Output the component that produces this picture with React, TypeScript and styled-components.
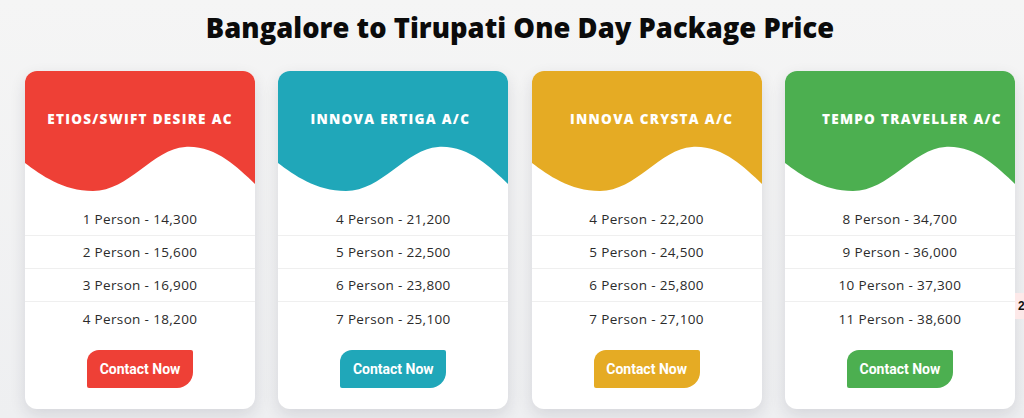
import React from "react";
import styled, { createGlobalStyle } from "styled-components";

const Global = createGlobalStyle`
  html, body { margin: 0; padding: 0; }
  body {
    background: #f3f3f4;
    font-family: "Open Sans", "Liberation Sans", sans-serif;
    width: 1024px;
    height: 418px;
    overflow: hidden;
  }
`;

const Page = styled.div`
  position: relative;
  width: 1024px;
  height: 418px;
  display: flex;
  flex-direction: column;
  align-items: center;
  background: linear-gradient(#f5f5f5, #eeeff1);
`;

const Heading = styled.h1`
  margin: 10px 0 0 16px;
  height: 36px;
  line-height: 36px;
  font-family: "Open Sans", "Liberation Sans", sans-serif;
  font-weight: 800;
  font-size: 27.3px;
  letter-spacing: 0.05px;
  color: #0b0b0b;
  text-align: center;
`;

const Grid = styled.div`
  margin-top: 25px;
  display: grid;
  grid-template-columns: repeat(4, 230px);
  column-gap: 23.3px;
  align-self: flex-start;
  margin-left: 25px;
`;

const Card = styled.div`
  background: #ffffff;
  border-radius: 12px;
  overflow: hidden;
  box-shadow: 0 6px 16px rgba(30, 35, 60, 0.12);
  display: flex;
  flex-direction: column;
  align-items: center;
  height: 338px;
`;

const Header = styled.div`
  position: relative;
  width: 230px;
  height: 122px;
  flex: none;
`;

const Wave = styled.svg`
  position: absolute;
  left: 0;
  top: 0;
  width: 230px;
  height: 122px;
  display: block;
`;

const Title = styled.div<{ $shift: number }>`
  position: absolute;
  left: 0;
  right: 0;
  top: 38px;
  text-align: center;
  transform: translateX(${(p) => p.$shift}px);
  color: #ffffff;
  font-family: "Open Sans", "Liberation Sans", sans-serif;
  font-weight: 800;
  font-size: 13.5px;
  letter-spacing: 1.3px;
  line-height: 20px;
  white-space: nowrap;
`;

const Rows = styled.div`
  margin-top: 10px;
  width: 100%;
  display: flex;
  flex-direction: column;
`;

const Row = styled.div`
  height: 32px;
  display: flex;
  align-items: center;
  justify-content: center;
  font-family: "Open Sans", "Liberation Sans", sans-serif;
  font-size: 13.5px;
  letter-spacing: 0.35px;
  color: #2b2b2b;
  border-bottom: 1px solid #efefef;
  &:last-child { border-bottom: none; height: 33px; }
`;

const Button = styled.button<{ $bg: string }>`
  margin-top: 15px;
  width: 106px;
  height: 38px;
  border: none;
  padding: 0;
  background: ${(p) => p.$bg};
  color: #ffffff;
  font-family: Roboto, "Liberation Sans", sans-serif;
  font-weight: 700;
  font-size: 14px;
  border-radius: 12px 2px 16px 2px;
  cursor: pointer;
`;

const Badge = styled.div`
  position: absolute;
  left: 1015px;
  top: 293px;
  width: 20px;
  height: 26px;
  background: #fde9e9;
  color: #111;
  font-family: "Liberation Sans", sans-serif;
  font-weight: 700;
  font-size: 12px;
  line-height: 26px;
  padding-left: 3px;
`;

type Pkg = { name: string; color: string; rows: string[]; shift: number };

const packages: Pkg[] = [
  {
    name: "ETIOS/SWIFT DESIRE AC",
    color: "#ee4036",
    shift: 0,
    rows: ["1 Person - 14,300", "2 Person - 15,600", "3 Person - 16,900", "4 Person - 18,200"],
  },
  {
    name: "INNOVA ERTIGA A/C",
    color: "#20a7b9",
    shift: -3,
    rows: ["4 Person - 21,200", "5 Person - 22,500", "6 Person - 23,800", "7 Person - 25,100"],
  },
  {
    name: "INNOVA CRYSTA A/C",
    color: "#e5ab24",
    shift: 5,
    rows: ["4 Person - 22,200", "5 Person - 24,500", "6 Person - 25,800", "7 Person - 27,100"],
  },
  {
    name: "TEMPO TRAVELLER A/C",
    color: "#4caf50",
    shift: 12,
    rows: ["8 Person - 34,700", "9 Person - 36,000", "10 Person - 37,300", "11 Person - 38,600"],
  },
];

const WAVE =
  "M0,0 H230 V113 C212,96 190,74 160,76 C128,78 104,120 68,120 C38,120 16,104 0,92 Z";

export default function App() {
  return (
    <Page>
      <Global />
      <Heading>Bangalore to Tirupati One Day Package Price</Heading>
      <Grid>
        {packages.map((p) => (
          <Card key={p.name}>
            <Header>
              <Wave viewBox="0 0 230 122" preserveAspectRatio="none">
                <path d={WAVE} fill={p.color} />
              </Wave>
              <Title $shift={p.shift}>{p.name}</Title>
            </Header>
            <Rows>
              {p.rows.map((r) => (
                <Row key={r}>{r}</Row>
              ))}
            </Rows>
            <Button $bg={p.color}>Contact Now</Button>
          </Card>
        ))}
      </Grid>
      <Badge>2</Badge>
    </Page>
  );
}
